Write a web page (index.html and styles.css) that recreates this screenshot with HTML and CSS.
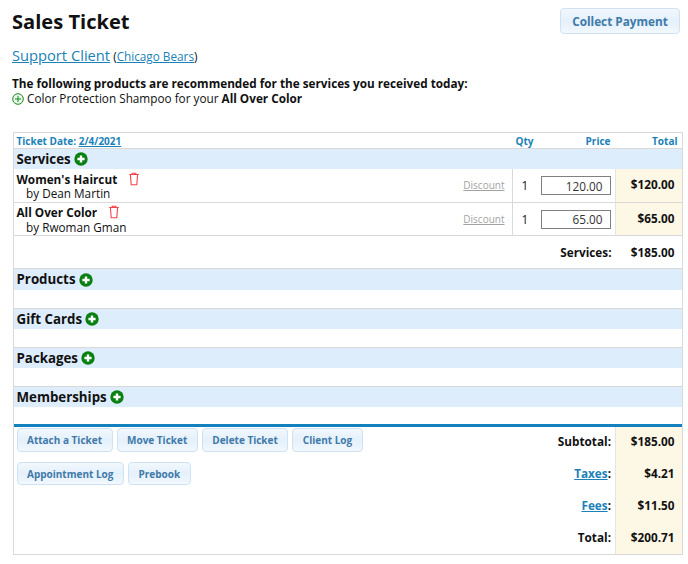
FILE: index.html
```html
<!DOCTYPE html>
<html lang="en">
<head>
<meta charset="utf-8">
<title>Sales Ticket</title>
<link rel="stylesheet" href="styles.css">
</head>
<body>
<svg class="defs" width="0" height="0" aria-hidden="true">
  <symbol id="plus" viewBox="0 0 14 14"><circle cx="7" cy="7" r="6.7" fill="#0a8012"/><path d="M7 3.4v7.2M3.4 7h7.2" stroke="#fff" stroke-width="2.4"/></symbol>
  <symbol id="trash" viewBox="0 0 12 14"><path d="M1.2 2.5h9.6M4.2 2.5V1.2h3.6v1.3M2.4 2.5l.8 10.2h5.6l.8-10.2" fill="none" stroke="#f5424b" stroke-width="1.1"/></symbol>
</svg>
<header class="top">
  <h1>Sales Ticket</h1>
  <button class="btn btn-big">Collect Payment</button>
</header>
<p class="client"><a class="client-name" href="#">Support Client</a> (<a href="#">Chicago Bears</a>)</p>
<div class="recs">
  <strong>The following products are recommended for the services you received today:</strong>
  <div class="rec-line">
    <svg class="rec-plus" width="12" height="12" viewBox="0 0 12 12"><circle cx="6" cy="6" r="5.3" fill="#eaf6ea" stroke="#17891f"/><path d="M6 3v6M3 6h6" stroke="#17891f"/></svg>
    <span>Color Protection Shampoo for your <strong>All Over Color</strong></span>
  </div>
</div>
<main class="ticket">
  <div class="head-row">
    <div class="head-date">Ticket Date: <a href="#">2/4/2021</a></div>
    <div class="head-qty">Qty</div>
    <div class="head-price">Price</div>
    <div class="head-total">Total</div>
  </div>
  <div class="band">Services <svg class="add" width="14" height="14"><use href="#plus"/></svg></div>
  <div class="item item-first">
    <div class="item-name">
      <div class="item-title"><strong>Women's Haircut</strong><svg class="trash" width="12" height="14"><use href="#trash"/></svg></div>
      <div class="by">by Dean Martin</div>
    </div>
    <a class="discount" href="#">Discount</a>
    <div class="qty">1</div>
    <div class="price"><input class="price-input" value="120.00"></div>
    <div class="amount">$120.00</div>
  </div>
  <div class="item">
    <div class="item-name">
      <div class="item-title"><strong>All Over Color</strong><svg class="trash" width="12" height="14"><use href="#trash"/></svg></div>
      <div class="by">by Rwoman Gman</div>
    </div>
    <a class="discount" href="#">Discount</a>
    <div class="qty">1</div>
    <div class="price"><input class="price-input" value="65.00"></div>
    <div class="amount">$65.00</div>
  </div>
  <div class="sub-row"><span class="sub-label">Services:</span><span class="sub-value">$185.00</span></div>
  <section class="section section-first"><div class="band">Products <svg class="add" width="14" height="14"><use href="#plus"/></svg></div></section>
  <section class="section"><div class="band">Gift Cards <svg class="add" width="14" height="14"><use href="#plus"/></svg></div></section>
  <section class="section"><div class="band">Packages <svg class="add" width="14" height="14"><use href="#plus"/></svg></div></section>
  <section class="section section-last"><div class="band">Memberships <svg class="add" width="14" height="14"><use href="#plus"/></svg></div></section>
  <footer class="foot">
    <div class="actions">
      <button class="btn">Attach a Ticket</button>
      <button class="btn">Move Ticket</button>
      <button class="btn">Delete Ticket</button>
      <button class="btn">Client Log</button>
      <button class="btn">Appointment Log</button>
      <button class="btn">Prebook</button>
    </div>
    <div class="totals">
      <div class="total-row"><span class="total-label">Subtotal:</span><span class="total-value">$185.00</span></div>
      <div class="total-row"><span class="total-label"><a href="#">Taxes</a>:</span><span class="total-value">$4.21</span></div>
      <div class="total-row"><span class="total-label"><a href="#">Fees</a>:</span><span class="total-value">$11.50</span></div>
      <div class="total-row"><span class="total-label">Total:</span><span class="total-value">$200.71</span></div>
    </div>
  </footer>
</main>
</body>
</html>
```
FILE: styles.css
```css
* { box-sizing: border-box; }
html, body { margin: 0; }
body {
  padding: 8px 6px 0 12px;
  font-family: "Open Sans", "Noto Sans", sans-serif;
  font-size: 11.75px;
  line-height: 15px;
  color: #111;
  background: #fff;
}
a { color: #1a82b8; }
.defs { position: absolute; }
.top { display: flex; justify-content: space-between; align-items: flex-start; height: 35px; }
h1 { margin: 0; font-size: 20.1px; line-height: 27px; font-weight: 700; color: #111; }
.btn {
  font-family: inherit;
  font-weight: 700;
  font-size: 10px;
  line-height: 14px;
  color: #3f7aa8;
  border: 1px solid #cfe2f3;
  border-radius: 4px;
  background: linear-gradient(#f2f8fd, #e4f0fb 50%, #f2f8fd);
  padding: 4px 9.5px;
  height: 23.5px;
}
.btn-big { font-size: 11.75px; height: 26px; width: 120px; padding: 0; margin-right: 2px; }
.client { margin: 0; height: 24px; line-height: 24px; }
.client-name { font-size: 14.7px; }
.recs { margin-top: 9px; height: 38px; }
.rec-line { display: flex; align-items: center; gap: 3px; height: 15px; }
.rec-plus { flex: none; }
.ticket { margin-top: 18px; border: 1px solid #d9d9d9; height: 423px; margin-left: 0.5px; width: 670px; }
.head-row { display: flex; height: 16px; border-bottom: 1px solid #d9d9d9; font-size: 10px; font-weight: 700; color: #1a82b8; line-height: 16px; }
.head-date { flex: 1; padding-left: 3px; }
.head-qty { width: 19px; }
.head-price { width: 76px; text-align: right; }
.head-total { width: 71px; text-align: right; padding-right: 4px; }
.band {
  display: flex; align-items: center; gap: 3px;
  height: 20px;
  background: #deedfb;
  padding-left: 3px;
  font-size: 13.3px;
  font-weight: 700;
  color: #111;
}
.add { flex: none; }
.item { display: flex; height: 33px; border-bottom: 1px solid #d9d9d9; }
.item-first { height: 34px; }
.item-name { flex: 1; padding: 2px 0 0 3px; }
.item-title { height: 15px; line-height: 15px; }
.item-first .item-name { padding-top: 3px; }
.item-first .item-title { height: 14px; }
.by { padding-left: 9.5px; line-height: 14px; }
.trash { margin-left: 11px; vertical-align: -2px; }
.discount { align-self: center; margin-right: 7px; color: #a3a3a3; font-size: 10px; }
.qty { width: 29px; border-left: 1px solid #d9d9d9; padding-left: 9px; line-height: 33px; }
.price { width: 74px; display: flex; align-items: center; }
.price-input {
  width: 70px; height: 19px;
  border: 1px solid #808080;
  font: 11.75px "Open Sans", sans-serif;
  color: #333;
  text-align: right;
  padding: 0 7px;
  background: #fff;
  border-radius: 0;
}
.amount { width: 67px; background: #fdf7e5; border-left: 1px solid #e5e5e5; text-align: right; padding-right: 7px; font-weight: 700; line-height: 30px; }
.sub-row { display: flex; justify-content: flex-end; height: 33px; border-bottom: 1px solid #d9d9d9; font-weight: 700; line-height: 32px; }
.sub-label { padding-right: 3px; }
.sub-value { width: 67px; text-align: right; padding-right: 7px; }
.section { height: 39px; border-bottom: 1px solid #d9d9d9; }
.section-first { height: 40px; }
.section-first .band { height: 21px; }
.section-last { border-bottom: 0; height: 37px; }
.foot { display: flex; border-top: 3px solid #1381bd; height: 130px; }
.actions { flex: 1; display: flex; flex-wrap: wrap; align-content: flex-start; gap: 10px 4px; padding: 1px 0 0 3px; }
.totals { width: 300px; display: flex; flex-direction: column; }
.total-row { display: flex; flex: none; justify-content: flex-end; height: 32px; font-weight: 700; line-height: 29px; }
.total-label { padding-right: 3.5px; }
.total-value { width: 67px; background: #fdf7e5; border-left: 1px solid #e5e5e5; text-align: right; padding-right: 7px; }
.total-row:last-child { height: 31px; }
```
